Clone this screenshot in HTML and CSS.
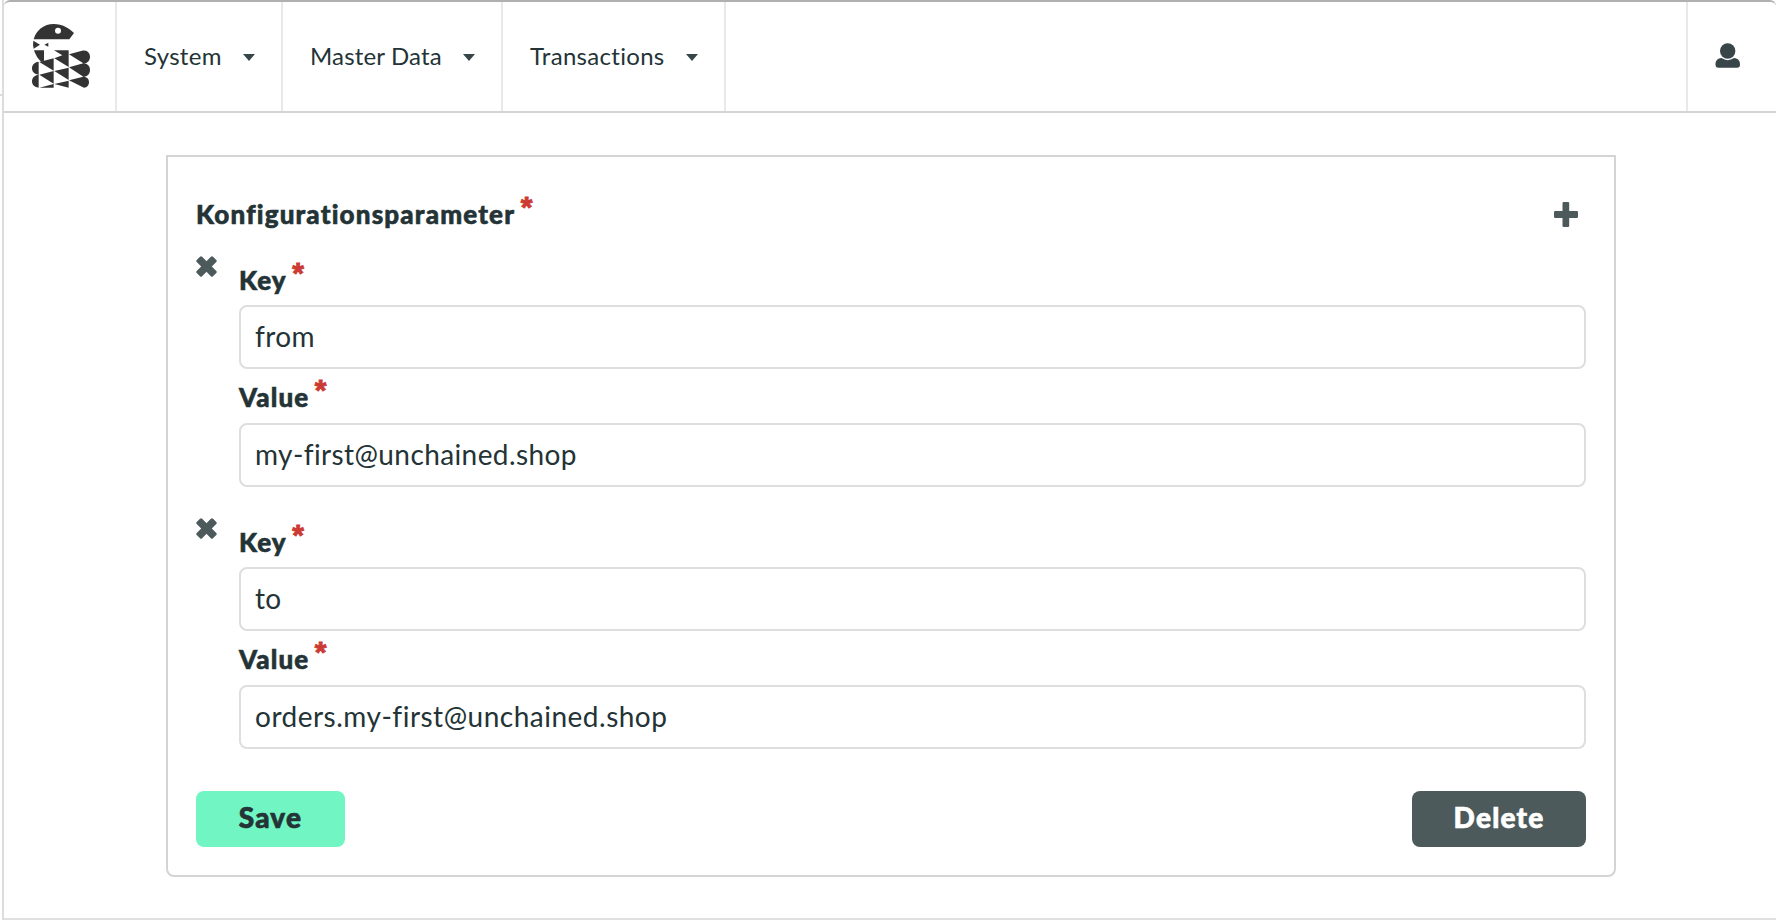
FILE: index.html
```html
<!DOCTYPE html>
<html lang="de">
<head>
<meta charset="utf-8">
<title>Konfigurationsparameter</title>
<link rel="stylesheet" href="styles.css">
</head>
<body>
<div class="edge"><div class="edge-top"></div></div>
<div class="window">
  <header class="navbar">
    <a class="logo">
      <svg width="60" height="66" viewBox="93 69 180 198" fill="#333">
        <path d="M101 118C108 90 132 72 161 72C188 72 206 85 222 99L208 118Z"/>
        <circle cx="174" cy="92" r="9" fill="#fff"/>
        <path d="M100 122L120 134L101 146Q98 134 100 122ZM133 134L145 128V140Z"/>
        <path d="M102 151H132V182L124 186Q108 171 102 151ZM162 151H206V201L163 175L187 166Z"/>
        <path d="M118 186L161 175V212ZM118 224L161 213V251ZM118 263L161 252V263ZM163 213L206 203V240ZM163 252L206 242V263Z"/>
        <path d="M207 163L246 152C262 148 270 159 270 170C270 181 263 190 250 190ZM207 202L250 190C263 190 270 199 270 210C270 221 263 230 250 230ZM207 241L250 230C261 230 267 237 267 246C267 256 261 263 252 263Z"/>
        <path d="M116 185C103 186 96 195 96 205C96 215 103 223 116 224ZM116 224C103 225 96 234 96 244C96 254 103 262 116 263Z"/>
      </svg>
    </a>
    <a class="nav-item system"><span>System</span><i class="caret"></i></a>
    <a class="nav-item master"><span>Master Data</span><i class="caret"></i></a>
    <a class="nav-item transactions"><span>Transactions</span><i class="caret"></i></a>
    <a class="user">
      <svg width="26" height="26" viewBox="0 0 26 26" fill="#384649">
        <circle cx="12.7" cy="8" r="7.7"/>
        <path d="M6.5 15C2 15.5.5 18 .5 21.5Q.5 24.700 3.500 24.700H22Q25 24.700 25 21.500C25 18 23.500 15.500 19 15Q12.700 19.300 6.500 15Z"/>
      </svg>
    </a>
  </header>
  <main class="content">
    <form class="card">
      <div class="card-head">
        <label class="label title">Konfigurationsparameter<sup class="req">*</sup></label>
        <svg class="plus" width="24" height="25" viewBox="0 0 24 25"><path d="M9.500 0H14Q15.200 0 15.200 1.200V9H22.800Q24 9 24 10.200V14.800Q24 16 22.800 16H15.200V23.800Q15.200 25 14 25H9.700Q8.500 25 8.500 23.800V16H1.200Q0 16 0 14.800V10.200Q0 9 1.200 9H8.500V1.200Q8.500 0 9.700 0Z"/></svg>
      </div>
      <section class="entry">
        <svg class="remove" width="21" height="21" viewBox="-10.500 -10.500 21 21"><rect x="-11.500" y="-3.800" width="23" height="7.600" rx="1.500" transform="rotate(45)"/><rect x="-11.500" y="-3.800" width="23" height="7.600" rx="1.500" transform="rotate(-45)"/></svg>
        <div class="fields">
          <label class="label key">Key<sup class="req">*</sup></label>
          <input class="input" value="from">
          <label class="label val">Value<sup class="req">*</sup></label>
          <input class="input" value="my-first@unchained.shop">
        </div>
      </section>
      <section class="entry">
        <svg class="remove" width="21" height="21" viewBox="-10.500 -10.500 21 21"><rect x="-11.500" y="-3.800" width="23" height="7.600" rx="1.500" transform="rotate(45)"/><rect x="-11.500" y="-3.800" width="23" height="7.600" rx="1.500" transform="rotate(-45)"/></svg>
        <div class="fields">
          <label class="label key">Key<sup class="req">*</sup></label>
          <input class="input" value="to">
          <label class="label val">Value<sup class="req">*</sup></label>
          <input class="input long" value="orders.my-first@unchained.shop">
        </div>
      </section>
      <div class="actions">
        <button type="button" class="btn save">Save</button>
        <button type="button" class="btn delete">Delete</button>
      </div>
    </form>
  </main>
</div>
</body>
</html>
```
FILE: styles.css
```css
* { box-sizing: border-box; }

body {
  margin: 0;
  height: 920px;
  display: flex;
  overflow: hidden;
  background: #fff;
  color: #233336;
  font-family: Lato, "Open Sans", sans-serif;
}

.edge {
  width: 4px;
  border-right: 2px solid #dcdcdc;
}

.edge-top {
  height: 96px;
  border-bottom: 2px solid #dcdcdc;
}

.window {
  flex: 1;
  display: flex;
  flex-direction: column;
  border-top: 2px solid #b0b0b0;
  border-bottom: 2px solid #e0e0e0;
  border-radius: 6px 6px 0 0;
}

.navbar {
  height: 111px;
  display: flex;
  border-bottom: 2px solid #d4d4d5;
}

.logo {
  width: 113px;
  padding: 21px 0 0 27px;
  border-right: 2px solid #e8e8e8;
}

.nav-item {
  display: flex;
  align-items: center;
  justify-content: space-between;
  padding: 0 26px 0 27px;
  border-right: 2px solid #e8e8e8;
  font-size: 24px;
  letter-spacing: .15px;
  white-space: nowrap;
}

.nav-item span { margin-top: -3px; }
.system { width: 166px; letter-spacing: .3px; }
.master { width: 220px; }
.transactions { width: 223px; letter-spacing: .3px; }

.caret {
  margin-top: 2px;
  border: 6px solid transparent;
  border-top: 7px solid #384649;
  border-bottom: 0;
}

.user {
  width: 90px;
  margin-left: auto;
  padding: 41px 0 0 27px;
  border-left: 2px solid #e8e8e8;
}

.content { padding: 42px 160px 0 162px; }

.card {
  height: 722px;
  padding: 0 28px;
  border: 2px solid #d4d4d5;
  border-radius: 0 0 8px 8px;
}

.card-head {
  height: 99px;
  display: flex;
  justify-content: space-between;
  padding: 41px 8px 0 0;
}

.plus { margin-top: 4px; fill: #4d5a5b; }

.label {
  display: block;
  font-size: 26px;
  font-weight: 900;
  line-height: 32px;
  letter-spacing: 1.1px;
  -webkit-text-stroke: .6px;
}

.title { letter-spacing: 1.17px; }

.req {
  display: inline-block;
  margin-left: 5.5px;
  color: #cc3b33;
  font: bold 30px/0 "Liberation Sans", sans-serif;
  letter-spacing: 0;
  vertical-align: 7px;
  -webkit-text-stroke: .9px;
}

.entry {
  display: flex;
  gap: 22px;
  height: 262px;
}

.remove {
  flex: none;
  fill: #4d5a5b;
}

.fields {
  flex: 1;
  display: flex;
  flex-direction: column;
}

.key { padding: 8px 0 9px; }
.val { padding: 12px 0 10px; }

.input {
  width: 100%;
  height: 64px;
  flex: none;
  padding: 0 14px 3px;
  border: 2px solid #dededf;
  border-radius: 8px;
  outline: 0;
  background: #fff;
  color: inherit;
  font: 28px Lato, "Open Sans", sans-serif;
  letter-spacing: .4px;
}

.long { letter-spacing: .5px; }

.actions {
  display: flex;
  justify-content: space-between;
  margin-top: 11px;
}

.btn {
  height: 56px;
  padding: 0 0 5px;
  border: 0;
  border-radius: 8px;
  font: 900 28px Lato, "Open Sans", sans-serif;
  letter-spacing: 1.2px;
  -webkit-text-stroke: .7px;
}

.save { width: 149px; background: #71f5c3; color: #233336; }
.delete { width: 174px; background: #4d5a5b; color: #fff; }
```
